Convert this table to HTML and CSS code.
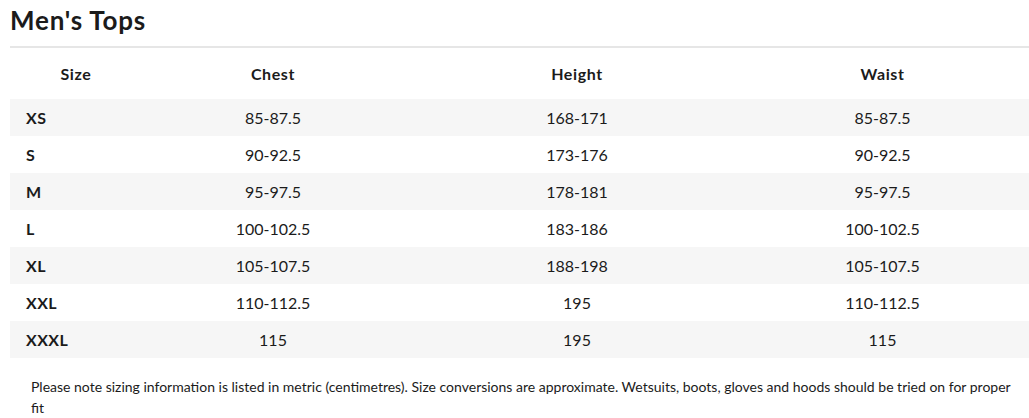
FILE: index.html
```html
<!DOCTYPE html>
<html lang="en">
<head>
<meta charset="utf-8">
<title>Men's Tops</title>
<link rel="stylesheet" href="styles.css">
</head>
<body>
<main class="page">
  <h2 class="title">Men's Tops</h2>
  <table class="size-table">
    <colgroup>
      <col class="c1"><col class="c2"><col class="c3"><col class="c4">
    </colgroup>
    <thead>
      <tr><th>Size</th><th>Chest</th><th>Height</th><th class="last">Waist</th></tr>
    </thead>
    <tbody>
      <tr><td class="size">XS</td><td>85-87.5</td><td>168-171</td><td class="last">85-87.5</td></tr>
      <tr><td class="size">S</td><td>90-92.5</td><td>173-176</td><td class="last">90-92.5</td></tr>
      <tr><td class="size">M</td><td>95-97.5</td><td>178-181</td><td class="last">95-97.5</td></tr>
      <tr><td class="size">L</td><td>100-102.5</td><td>183-186</td><td class="last">100-102.5</td></tr>
      <tr><td class="size">XL</td><td>105-107.5</td><td>188-198</td><td class="last">105-107.5</td></tr>
      <tr><td class="size">XXL</td><td>110-112.5</td><td>195</td><td class="last">110-112.5</td></tr>
      <tr><td class="size">XXXL</td><td>115</td><td>195</td><td class="last">115</td></tr>
    </tbody>
  </table>
  <p class="note">Please note sizing information is listed in metric (centimetres). Size conversions are approximate. Wetsuits, boots, gloves and hoods should be tried on for proper fit</p>
</main>
</body>
</html>
```

FILE: styles.css
```css
html, body {
  margin: 0;
  padding: 0;
  background: #ffffff;
}
body {
  font-family: Lato, "Liberation Sans", sans-serif;
  color: #1b1b1b;
  overflow: hidden;
}
.page {
  padding-left: 10px;
}
.title {
  margin: 0;
  padding-top: 5px;
  font-size: 26px;
  line-height: 30px;
  font-weight: 700;
  letter-spacing: 0.8px;
  border-bottom: 2px solid #e6e6e6;
  box-sizing: border-box;
  height: 48px;
}
.size-table {
  border-collapse: collapse;
  width: 1019px;
  table-layout: fixed;
}
.c1 { width: 132px; }
.c2 { width: 262px; }
.c3 { width: 346px; }
.c4 { width: 279px; }
.size-table th,
.size-table td {
  padding: 0 16px 1px;
  text-align: center;
  font-size: 16px;
}
.size-table th {
  height: 50px;
  font-weight: 700;
  letter-spacing: 0.6px;
}
.size-table td {
  height: 36px;
  font-weight: 400;
}
.size-table .last {
  padding-left: 16px;
  padding-right: 30px;
}
.size-table td.size {
  text-align: left;
  font-weight: 700;
  letter-spacing: 0.4px;
}
.size-table tbody tr:nth-child(odd) {
  background: #f6f6f6;
}
.note {
  margin: 18px 0 0;
  padding-left: 21px;
  padding-right: 12px;
  font-size: 14px;
  line-height: 21px;
}
```
